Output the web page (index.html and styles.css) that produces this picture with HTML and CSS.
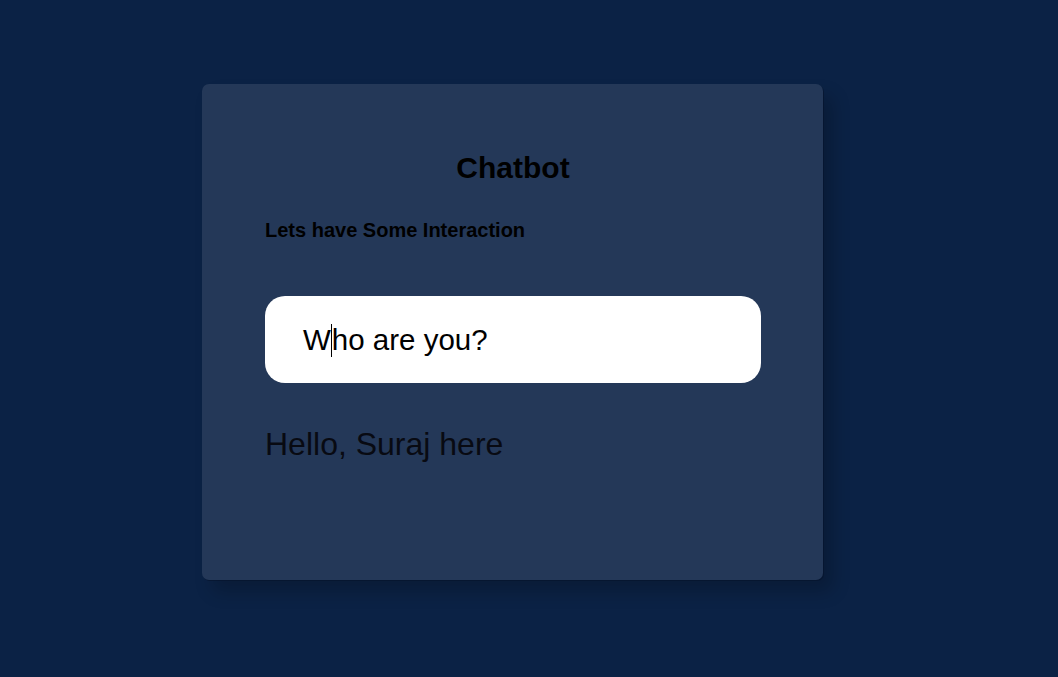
FILE: index.html
```html
<!DOCTYPE html>
<html lang="en">
<head>
<meta charset="utf-8">
<title>Chatbot</title>
<link rel="stylesheet" href="styles.css">
</head>
<body>
<main class="page">
  <section class="card">
    <h1 class="title">Chatbot</h1>
    <h3 class="subtitle">Lets have Some Interaction</h3>
    <div class="input-box"><span class="input-text">W<span class="caret"></span>ho are you?</span></div>
    <p class="reply">Hello, Suraj here</p>
  </section>
</main>
</body>
</html>
```

FILE: styles.css
```css
html, body {
  margin: 0;
  padding: 0;
  height: 100%;
}
body {
  background: #0b2245;
  font-family: "Liberation Sans", Arial, sans-serif;
  color: #000;
}
.page {
  display: flex;
  justify-content: flex-start;
  padding: 84px 0 0 202px;
}
.card {
  box-sizing: border-box;
  width: 621px;
  height: 496px;
  background: #243858;
  border-radius: 7px;
  padding: 66px 62px 0 63px;
  display: flex;
  flex-direction: column;
  box-shadow: 1px 1px 0 rgba(5, 20, 45, 0.7), 10px 12px 18px rgba(0, 0, 0, 0.2);
}
.title {
  margin: 0;
  font-size: 30px;
  line-height: 36px;
  font-weight: bold;
  text-align: center;
}
.subtitle {
  margin: 32px 0 0 0;
  font-size: 20px;
  line-height: 24px;
  font-weight: bold;
}
.input-box {
  margin-top: 54px;
  height: 87px;
  background: #fff;
  border-radius: 20px;
  display: flex;
  align-items: center;
  padding-left: 38px;
}
.input-text {
  font-size: 29.5px;
  line-height: 36px;
  color: #000;
}
.caret {
  display: inline-block;
  width: 0;
  height: 33px;
  border-left: 1px solid #000;
  vertical-align: -7px;
}
.reply {
  margin: 43px 0 0 0;
  font-size: 32px;
  line-height: 36px;
  color: #080a12;
}
```
